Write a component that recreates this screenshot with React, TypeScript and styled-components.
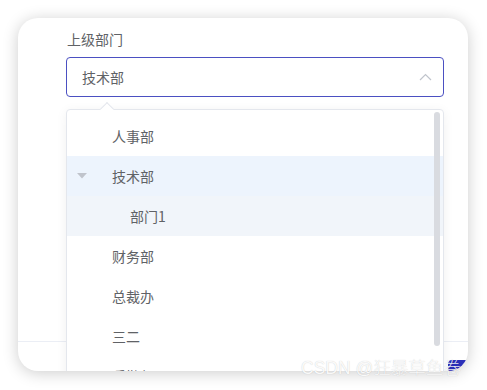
import React from "react";
import styled, { createGlobalStyle } from "styled-components";

const Global = createGlobalStyle`
  html, body { margin: 0; padding: 0; background: #ffffff; }
  body { font-family: "Noto Sans CJK SC", "Noto Sans", sans-serif; }
  * { box-sizing: border-box; }
`;

const Page = styled.div`
  position: relative;
  width: 487px;
  height: 390px;
  padding: 18px 19px 0 18px;
  overflow: hidden;
`;

const Card = styled.div`
  position: relative;
  width: 450px;
  height: 353px;
  background: #fff;
  border-radius: 20px;
  box-shadow: 0 2px 16px rgba(0, 0, 0, 0.2);
  overflow: hidden;
  display: flex;
  flex-direction: column;
`;

const Body = styled.div`
  flex: 0 0 324px;
  padding: 11px 24px 0 48px;
  border-bottom: 1px solid #ebeef5;
`;

const Label = styled.div`
  height: 20px;
  line-height: 20px;
  font-size: 14px;
  color: #606266;
  margin-bottom: 8px;
  padding-left: 1px;
`;

const Input = styled.div`
  height: 40px;
  border: 1px solid #4b50c2;
  border-radius: 4px;
  display: flex;
  align-items: center;
  justify-content: space-between;
  padding: 0 11px 0 15px;
  font-size: 14px;
  color: #606266;
`;

const Footer = styled.div`
  display: flex;
  padding: 18px 0 0 430px;
`;

const PrimaryButton = styled.div`
  flex: 0 0 80px;
  height: 32px;
  border-radius: 4px;
  background: #2b2fb8;
`;

const Dropdown = styled.div`
  position: absolute;
  left: 48px;
  top: 91px;
  width: 378px;
  height: 300px;
  background: #fff;
  border: 1px solid #e4e7ed;
  border-radius: 4px;
  box-shadow: 0 2px 12px rgba(0, 0, 0, 0.06);
  padding-top: 6px;
`;

const Arrow = styled.div`
  position: absolute;
  top: -6px;
  left: 35px;
  width: 10px;
  height: 10px;
  background: #fff;
  border-left: 1px solid #e4e7ed;
  border-top: 1px solid #e4e7ed;
  transform: rotate(45deg);
`;

const Row = styled.div<{ $level: number; $bg?: string }>`
  height: 40px;
  display: flex;
  align-items: center;
  padding-left: ${(p) => 8 + p.$level * 18}px;
  background: ${(p) => p.$bg || "transparent"};
  font-size: 14px;
  color: #606266;
`;

const CaretSlot = styled.div`
  width: 14px;
  height: 14px;
  display: flex;
  align-items: center;
  justify-content: center;
  margin-right: 23px;
`;

const Scrollbar = styled.div`
  position: absolute;
  right: 3px;
  top: 2px;
  width: 6px;
  height: 234px;
  border-radius: 3px;
  background: #d9dbe0;
`;

const Watermark = styled.div`
  position: absolute;
  left: 301px;
  top: 357px;
  font-family: "Liberation Sans", "Noto Sans CJK SC", sans-serif;
  font-size: 17.5px;
  font-weight: 300;
  line-height: 22px;
  white-space: nowrap;
  color: rgba(255, 255, 255, 0.92);
  text-shadow: 0 0 1px rgba(0, 0, 0, 0.22);
`;

const items: { label: string; level: number; bg?: string; caret?: boolean }[] = [
  { label: "人事部", level: 0 },
  { label: "技术部", level: 0, bg: "#edf4fd", caret: true },
  { label: "部门1", level: 1, bg: "#f1f5fa" },
  { label: "财务部", level: 0 },
  { label: "总裁办", level: 0 },
  { label: "三二", level: 0 },
  { label: "后勤部", level: 0 },
];

export default function App() {
  return (
    <>
      <Global />
      <Page>
        <Card>
          <Body>
            <Label>上级部门</Label>
            <Input>
              <span>技术部</span>
              <svg width="13" height="8" viewBox="0 0 13 8">
                <path d="M1 7 L6.5 1.5 L12 7" fill="none" stroke="#c0c4cc" strokeWidth="1.2" />
              </svg>
            </Input>
          </Body>
          <Footer>
            <PrimaryButton />
          </Footer>
          <Dropdown>
            <Arrow />
            {items.map((it) => (
              <Row key={it.label} $level={it.level} $bg={it.bg}>
                <CaretSlot>
                  {it.caret && (
                    <svg width="10" height="6" viewBox="0 0 10 6">
                      <path d="M0 0 L10 0 L5 5.5 Z" fill="#c0c4cc" />
                    </svg>
                  )}
                </CaretSlot>
                {it.label}
              </Row>
            ))}
            <Scrollbar />
          </Dropdown>
        </Card>
        <Watermark>CSDN @狂暴草鱼卷</Watermark>
      </Page>
    </>
  );
}
